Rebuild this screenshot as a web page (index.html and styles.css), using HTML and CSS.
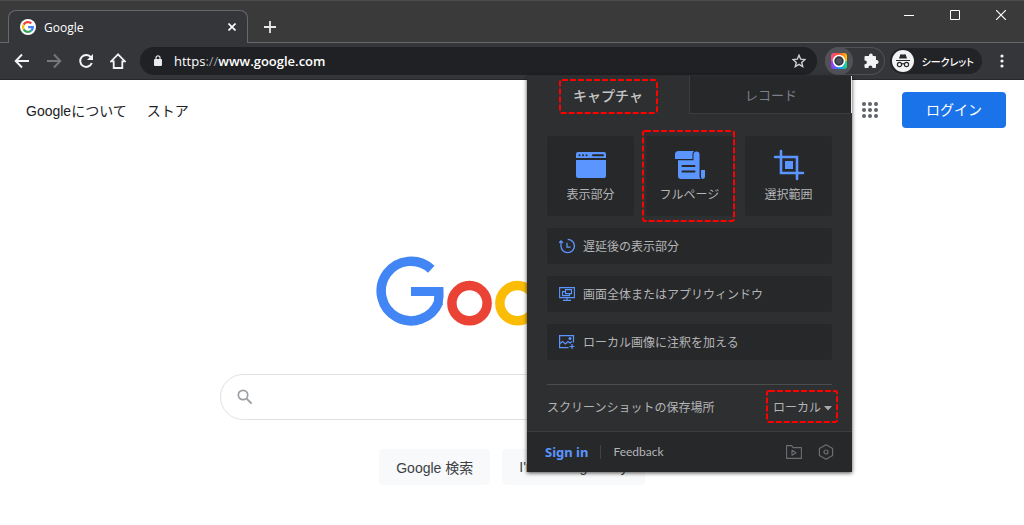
FILE: index.html
```html
<!DOCTYPE html>
<html lang="ja">
<head>
<meta charset="utf-8">
<meta name="viewport" content="width=device-width, initial-scale=1">
<title>Google</title>
<link rel="stylesheet" href="styles.css">
</head>
<body>
<header class="chrome">
  <div class="titlebar">
    <div class="tab">
      <svg class="favicon" width="16" height="16" viewBox="0 0 16 16" aria-hidden="true">
        <circle cx="8" cy="8" r="8" fill="#fff"/>
        <g fill="none" stroke-width="2.2">
          <path d="M11.3 4.4A4.9 4.9 0 0 0 3.7 5.6" stroke="#ea4335"/>
          <path d="M3.7 5.6A4.9 4.9 0 0 0 3.7 10.4" stroke="#fbbc05"/>
          <path d="M3.7 10.4A4.9 4.9 0 0 0 11.2 11.7" stroke="#34a853"/>
          <path d="M11.2 11.7A4.9 4.9 0 0 0 12.9 8.1H8.1" stroke="#4285f4"/>
        </g>
      </svg>
      <span class="tab-title">Google</span>
      <button class="icon-btn" aria-label="タブを閉じる"><svg width="8" height="8" viewBox="0 0 8 8"><path d="M.5.5l7 7M7.5.5l-7 7" stroke="#fff" stroke-width="1.6"/></svg></button>
    </div>
    <button class="icon-btn new-tab" aria-label="新しいタブ"><svg width="12" height="12" viewBox="0 0 12 12"><path d="M6 0v12M0 6h12" stroke="#e8e8e8" stroke-width="1.8"/></svg></button>
    <div class="window-controls">
      <button class="icon-btn" aria-label="最小化"><svg width="10" height="10" viewBox="0 0 10 10"><path d="M0 5.5h10" stroke="#fff"/></svg></button>
      <button class="icon-btn" aria-label="最大化"><svg width="10" height="10" viewBox="0 0 10 10"><path d="M.5.5h9v9h-9z" fill="none" stroke="#fff"/></svg></button>
      <button class="icon-btn" aria-label="閉じる"><svg width="10" height="10" viewBox="0 0 10 10"><path d="M0 0l10 10M10 0L0 10" stroke="#fff" stroke-width="1.2"/></svg></button>
    </div>
  </div>
  <div class="toolbar">
    <nav class="nav-buttons">
      <button class="icon-btn" aria-label="戻る"><svg width="16" height="16" viewBox="0 0 16 16"><path d="M15 8H2M8 1.5L1.7 8 8 14.5" fill="none" stroke="#f1f3f4" stroke-width="1.9"/></svg></button>
      <button class="icon-btn" aria-label="進む"><svg width="16" height="16" viewBox="0 0 16 16"><path d="M1 8h13M8 1.5L14.3 8 8 14.5" fill="none" stroke="#77787b" stroke-width="1.9"/></svg></button>
      <button class="icon-btn" aria-label="再読み込み"><svg width="16" height="16" viewBox="0 0 16 16"><path d="M13 4.3A6 6 0 1 0 13.8 10" fill="none" stroke="#f1f3f4" stroke-width="2"/><path d="M15 1v6H9z" fill="#f1f3f4"/></svg></button>
      <button class="icon-btn" aria-label="ホーム"><svg width="16" height="16" viewBox="0 0 16 16"><path d="M8 1.3L1 8.4h2.7v6.6h8.6V8.4H15z" fill="none" stroke="#f1f3f4" stroke-width="1.8"/></svg></button>
    </nav>
    <div class="address">
      <svg width="8" height="12" viewBox="0 0 8 12" aria-hidden="true"><rect y="4" width="8" height="7" rx="1" fill="#e8eaed"/><path d="M2 4.5V2.8a2 2 0 0 1 4 0v1.7" fill="none" stroke="#e8eaed" stroke-width="1.2"/></svg>
      <span class="url">https<span class="slashes">://</span><span class="domain">www.google.com</span></span>
      <button class="icon-btn star" aria-label="ブックマーク"><svg width="14" height="14" viewBox="0 0 14 14"><path d="M7 1.2l1.7 4 4.2.4-3.2 2.8 1 4.2L7 10.4l-3.7 2.2 1-4.2L1.1 5.6l4.2-.4z" fill="none" stroke="#d0d1d4" stroke-width="1.4"/></svg></button>
    </div>
    <div class="extensions">
      <button class="icon-btn capture-ext" aria-label="キャプチャ拡張機能">
        <svg width="16" height="16" viewBox="0 0 16 16">
          <defs><linearGradient id="warm" x1="0" y1="0" x2="1" y2="0"><stop offset="0" stop-color="#f0508c"/><stop offset=".5" stop-color="#ff4d3a"/><stop offset="1" stop-color="#ffc400"/></linearGradient><linearGradient id="cool" x1="0" y1="0" x2="1" y2="0"><stop offset="0" stop-color="#b02cf5"/><stop offset=".5" stop-color="#168dff"/><stop offset="1" stop-color="#22d984"/></linearGradient></defs>
          <path d="M0 3a3 3 0 0 1 3-3h10a3 3 0 0 1 3 3v5H0z" fill="url(#warm)"/><path d="M0 8h16v5a3 3 0 0 1-3 3H3a3 3 0 0 1-3-3z" fill="url(#cool)"/>
          <circle cx="8" cy="8" r="5.5" fill="#30343b" stroke="#fff" stroke-width="1.6"/><circle cx="8" cy="8" r="3" fill="#49515c"/>
        </svg>
      </button>
      <button class="icon-btn" aria-label="拡張機能"><svg width="16" height="16" viewBox="0 0 16 16"><path d="M2.5 3H6v-.6a1.900 1.900 0 0 1 3.800 0V3H12a1 1 0 0 1 1 1v3h.6a2 2 0 0 1 0 4H13v3a1 1 0 0 1-1 1H9.400v-.5a2 2 0 0 0-4 0v.5H2.500a1 1 0 0 1-1-1v-2.800H2a1.900 1.900 0 0 0 0-3.800h-.5V4a1 1 0 0 1 1-1z" fill="#f1f3f4"/></svg></button>
    </div>
    <div class="incognito">
      <svg width="22" height="22" viewBox="0 0 22 22" aria-hidden="true"><circle cx="11" cy="11" r="11" fill="#f1f3f4"/><path d="M7 8.5L8.300 4.600Q9 4 10 4.600h2Q13 4 13.700 4.600L15 8.500z" fill="#292a2d"/><path d="M4 10.500h14M9.700 14q1.300-.7 2.600 0" stroke="#292a2d" stroke-width="1.200" fill="none"/><g fill="none" stroke="#292a2d" stroke-width="1.200"><circle cx="7.500" cy="14.500" r="2.100"/><circle cx="14.500" cy="14.500" r="2.100"/></g></svg>
      <span>シークレット</span>
    </div>
    <button class="icon-btn menu" aria-label="メニュー"><svg width="4" height="14" viewBox="0 0 4 14" fill="#f1f3f4"><circle cx="2" cy="2" r="1.600"/><circle cx="2" cy="7" r="1.600"/><circle cx="2" cy="12" r="1.600"/></svg></button>
  </div>
</header>

<main class="page">
  <header class="page-head">
    <a href="#">Googleについて</a>
    <a href="#">ストア</a>
    <button class="icon-btn apps" aria-label="アプリ"><svg width="16" height="16" viewBox="0 0 16 16" fill="#5f6368"><circle cx="2" cy="2" r="2"/><circle cx="8" cy="2" r="2"/><circle cx="14" cy="2" r="2"/><circle cx="2" cy="8" r="2"/><circle cx="8" cy="8" r="2"/><circle cx="14" cy="8" r="2"/><circle cx="2" cy="14" r="2"/><circle cx="8" cy="14" r="2"/><circle cx="14" cy="14" r="2"/></svg></button>
    <a class="login" href="#">ログイン</a>
  </header>
  <svg class="logo" width="272" height="92" viewBox="0 0 272 92" role="img" aria-label="Google">
    <g fill="none" stroke-width="9.500">
      <path d="M55.300 14.200A29.800 29.800 0 1 0 62.700 47" stroke="#4285f4"/>
      <path d="M35 32h32.400Q68.200 41 66.500 50L58 46Q58 43 58.200 41H35z" fill="#4285f4" stroke="none"/>
      <ellipse cx="93.500" cy="48.200" rx="17.600" ry="17.600" stroke="#ea4335"/>
      <ellipse cx="141.500" cy="48.200" rx="17.600" ry="17.600" stroke="#fbbc05"/>
    </g>
  </svg>
  <form class="search">
    <label class="search-box">
      <svg width="16" height="16" viewBox="0 0 16 16" aria-hidden="true"><circle cx="6" cy="6" r="4.700" fill="none" stroke="#9aa0a6" stroke-width="1.700"/><path d="M9.600 9.600l5 5" stroke="#9aa0a6" stroke-width="2"/></svg>
      <input type="text" aria-label="検索">
    </label>
    <div class="search-actions">
      <button type="button">Google 検索</button>
      <button type="button">I'm Feeling Lucky</button>
    </div>
  </form>
</main>

<aside class="popup">
  <div class="popup-tabs">
    <button class="popup-tab active">キャプチャ</button>
    <button class="popup-tab">レコード</button>
    <svg class="mark mark-tab" aria-hidden="true"><rect x="1" y="1" rx="2"/></svg>
  </div>
  <div class="popup-body">
    <div class="tiles">
      <button class="tile">
        <svg width="32" height="32" viewBox="0 0 32 32"><path d="M1 9V5a2 2 0 0 1 2-2h26a2 2 0 0 1 2 2v4zM1 11h30v16a2 2 0 0 1-2 2H3a2 2 0 0 1-2-2z" fill="#5b95ff"/><path d="M18 6.200h10" stroke="#27282a" stroke-width="2" stroke-linecap="round"/><g fill="#27282a"><circle cx="4.500" cy="6.200" r="1"/><circle cx="8" cy="6.200" r="1"/><circle cx="11.500" cy="6.200" r="1"/></g></svg>
        <span>表示部分</span>
      </button>
      <button class="tile">
        <svg width="32" height="32" viewBox="0 0 32 32"><path d="M1 10V5.500A3.500 3.500 0 0 1 4.500 2H20a4 4 0 0 0-1.500 3.200V10z" fill="#5b95ff"/><path d="M4 11.200h15.500V5.500a3 3 0 0 1 6 0V27a3.500 3.500 0 0 0 1.200 3H7a3 3 0 0 1-3-3zM27 21h4v6a2.800 2.800 0 0 1-2.800 3A3 3 0 0 1 27 27z" fill="#5b95ff"/><path d="M8.500 17h12M8.500 22.500h12" stroke="#27282a" stroke-width="2" stroke-linecap="round"/></svg>
        <span>フルページ</span>
        <svg class="mark mark-tile" aria-hidden="true"><rect x="1" y="1" rx="2"/></svg>
      </button>
      <button class="tile">
        <svg width="32" height="32" viewBox="0 0 32 32"><path d="M8 2v22h22M2 8h22v22" fill="none" stroke="#5b95ff" stroke-width="2.600" stroke-linecap="round"/><path d="M12 12h8v8h-8z" fill="#5b95ff"/></svg>
        <span>選択範囲</span>
      </button>
    </div>
    <button class="action">
      <svg width="16" height="16" viewBox="0 0 16 16"><path d="M2 3v5a6.700 6.700 0 1 0 6.700-6.700M.2 4.800L2 3l2 1.800M8 4.800v4.400h3.500" fill="none" stroke="#5b95ff" stroke-width="1.300"/></svg>
      遅延後の表示部分
    </button>
    <button class="action">
      <svg width="16" height="16" viewBox="0 0 16 16"><g fill="none" stroke="#5b95ff" stroke-width="1.100"><path d="M.6 1.600h14.800v10H.6zM6.500 3.600h6v4h-6zM10.500 7.600v2h-7v-4h3M4 14.400h8M8 11.600v2.800"/></g></svg>
      画面全体またはアプリウィンドウ
    </button>
    <button class="action">
      <svg width="16" height="16" viewBox="0 0 16 16"><path d="M14.500 8.500V1.600H.6v12h9M1 9.500l2.500-2 3 2.500 2.500-2.500 2 1.500 2-1.500M10.500 12.500h5M13 10v5" fill="none" stroke="#5b95ff" stroke-width="1.200"/><circle cx="11" cy="4.500" r="1.500" fill="#5b95ff"/></svg>
      ローカル画像に注釈を加える
    </button>
    <div class="save-row">
      <label for="save-place">スクリーンショットの保存場所</label>
      <div class="save-select">
        <select id="save-place"><option>ローカル</option></select>
        <svg width="8" height="5" viewBox="0 0 8 5" aria-hidden="true"><path d="M0 0h8L4 4.500z" fill="#a8a9ab"/></svg>
        <svg class="mark mark-select" aria-hidden="true"><rect x="1" y="1" rx="2"/></svg>
      </div>
    </div>
  </div>
  <footer class="popup-foot">
    <a class="sign-in" href="#">Sign in</a>
    <a class="feedback" href="#">Feedback</a>
    <button class="icon-btn folder" aria-label="保存フォルダ"><svg width="16" height="16" viewBox="0 0 16 16"><path d="M.6 1.600h5l1.500 2h8.300v10.800H.6zM6 6.200v5l4-2.500z" fill="none" stroke="#6d6e71" stroke-width="1.100" stroke-linejoin="round"/></svg></button>
    <button class="icon-btn" aria-label="設定"><svg width="16" height="16" viewBox="0 0 16 16"><path d="M8 .7l6.600 3.700v7.200L8 15.300l-6.600-3.700V4.400z" fill="none" stroke="#6d6e71" stroke-width="1.200" stroke-linejoin="round"/><circle cx="8" cy="8" r="2" fill="none" stroke="#6d6e71" stroke-width="1.200"/></svg></button>
  </footer>
</aside>
</body>
</html>
```
FILE: styles.css
```css
* { box-sizing: border-box; }
body {
  margin: 0;
  min-height: 100vh;
  position: relative;
  background: #fff;
  font-family: "Liberation Sans", "Noto Sans CJK JP", sans-serif;
  font-size: 14px;
}
button, input, select { font: inherit; color: inherit; }
button { border: 0; padding: 0; background: none; cursor: pointer; }
a { color: inherit; text-decoration: none; }
svg { display: block; flex: none; }
.icon-btn { display: flex; align-items: center; justify-content: center; flex: none; }

.chrome { color: #fff; font-family: "Open Sans", "Noto Sans CJK JP", sans-serif; }
.titlebar {
  display: flex;
  height: 43px;
  padding: 9px 18px 0 8px;
  background: #3a3a3a;
  border-top: 1px solid #4c4c4c;
  box-shadow: inset 0 -1px #68696b;
}
.tab {
  display: flex;
  align-items: center;
  gap: 8px;
  width: 240px;
  padding: 0 11px;
  background: #35363a;
  border: 1px solid #68696b;
  border-bottom: 0;
  border-radius: 8px 8px 0 0;
}
.tab-title { flex: 1; font-size: 12px; font-weight: 500; }
.new-tab { padding: 0 16px; }
.window-controls { display: flex; gap: 36px; height: 10px; margin-left: auto; }
.toolbar {
  display: flex;
  align-items: center;
  height: 37px;
  padding: 0 18px 0 14px;
  background: #35363a;
  border-bottom: 1px solid #27282a;
}
.nav-buttons { display: flex; gap: 16px; margin-right: 14px; }
.address {
  display: flex;
  flex: 1;
  align-items: center;
  gap: 12px;
  height: 28px;
  padding: 0 11px 0 14px;
  background: #202124;
  border-radius: 14px;
}
.url { font-size: 13px; font-weight: 500; }
.domain { font-weight: 600; }
.slashes { color: #9aa0a6; }
.star { margin-left: auto; }
.extensions {
  display: flex;
  align-items: center;
  gap: 10px;
  margin-left: 8px;
  padding-right: 6px;
  border-radius: 14px;
  box-shadow: inset 0 0 0 1px #505154;
}
.capture-ext { width: 28px; height: 28px; background: #505257; border-radius: 50%; }
.incognito {
  display: flex;
  align-items: center;
  gap: 8px;
  height: 26px;
  margin: 0 16px 0 5px;
  padding: 0 8px 0 2px;
  background: #222326;
  border-radius: 13px;
  font-size: 10px;
  font-weight: 500;
  font-feature-settings: "palt";
  white-space: nowrap;
}
.menu { width: 8px; }

.page { display: flex; flex-direction: column; align-items: center; }
.page-head {
  display: flex;
  align-items: center;
  gap: 20px;
  width: 100%;
  padding: 12px 18px 0 26px;
  color: #202124;
}
.apps { margin-left: auto; }
.login {
  padding: 0 24px;
  background: #1a73e8;
  border-radius: 4px;
  color: #fff;
  line-height: 36px;
  margin-left: 4px;
}
.logo { margin-top: 127px; }
.search { width: 57%; margin-top: 27px; }
.search-box {
  display: flex;
  align-items: center;
  gap: 12px;
  height: 46px;
  padding: 0 16px;
  border: 1px solid #dfe1e5;
  border-radius: 23px;
}
.search-box input { flex: 1; border: 0; outline: 0; background: none; }
.search-actions { display: flex; justify-content: center; gap: 12px; margin-top: 29px; }
.search-actions button {
  height: 36px;
  padding: 0 17px;
  background: #f8f9fa;
  border-radius: 4px;
  color: #3c4043;
}

.popup {
  position: absolute;
  top: 76px;
  right: 172px;
  width: 325px;
  background: #2e2f31;
  box-shadow: 0 1px 4px rgba(0, 0, 0, .7);
  color: #b4b5b7;
  font-family: "Noto Sans", "Noto Sans CJK JP", sans-serif;
  font-size: 12px;
}
.popup-tabs { display: flex; position: relative; }
.popup-tab { flex: 1; height: 38px; font-size: 13px; }
.popup-tab:not(.active) {
  background: #27282a;
  border: solid #3b3c3f;
  border-width: 0 0 1px 1px;
  box-shadow: inset -1px 0 #e8e8e8;
  color: #7c7e88;
}
.popup-tab.active { color: #c4c5c7; font-size: 14px; font-weight: 500; }
.popup-body { display: flex; flex-direction: column; gap: 12px; padding: 22px 20px 12px; }
.tiles { display: flex; gap: 12px; }
.tile {
  display: flex;
  flex: 1;
  flex-direction: column;
  align-items: center;
  gap: 4px;
  position: relative;
  height: 80px;
  padding-top: 13px;
  background: #27282a;
  border-radius: 2px;
}
.tile span { line-height: 20px; }
.action {
  display: flex;
  align-items: center;
  gap: 8px;
  height: 36px;
  padding: 0 12px;
  background: #27282a;
  border-radius: 2px;
}
.save-row {
  display: flex;
  align-items: center;
  justify-content: space-between;
  margin-top: 12px;
  padding-top: 12px;
  border-top: 1px solid #4c4d4f;
  line-height: 22px;
}
.save-select { display: flex; align-items: center; gap: 2px; position: relative; }
.save-select select { appearance: none; border: 0; padding: 0; background: none; outline: 0; }
.popup-foot {
  display: flex;
  align-items: center;
  height: 41px;
  padding: 0 18px;
  background: #27282a;
  border-top: 1px solid #3b3c3f;
}
.sign-in { color: #5b95ff; font-size: 13px; font-weight: 700; }
.feedback {
  margin-left: 12px;
  padding-left: 12px;
  border-left: 1px solid #414245;
  font-family: Lato, sans-serif;
  line-height: 14px;
}
.folder { margin: 0 16px 0 auto; }

.mark { position: absolute; pointer-events: none; }
.mark rect {
  width: calc(100% - 2px);
  height: calc(100% - 2px);
  fill: none;
  stroke: #f00;
  stroke-width: 2px;
  stroke-dasharray: 6 2;
}
.mark-tab { left: 32px; top: 3px; width: 99px; height: 35px; }
.mark-tile { left: -4px; top: -6px; width: 93px; height: 92px; }
.mark-select { left: -7px; top: -7px; width: 72px; height: 33px; }
```
